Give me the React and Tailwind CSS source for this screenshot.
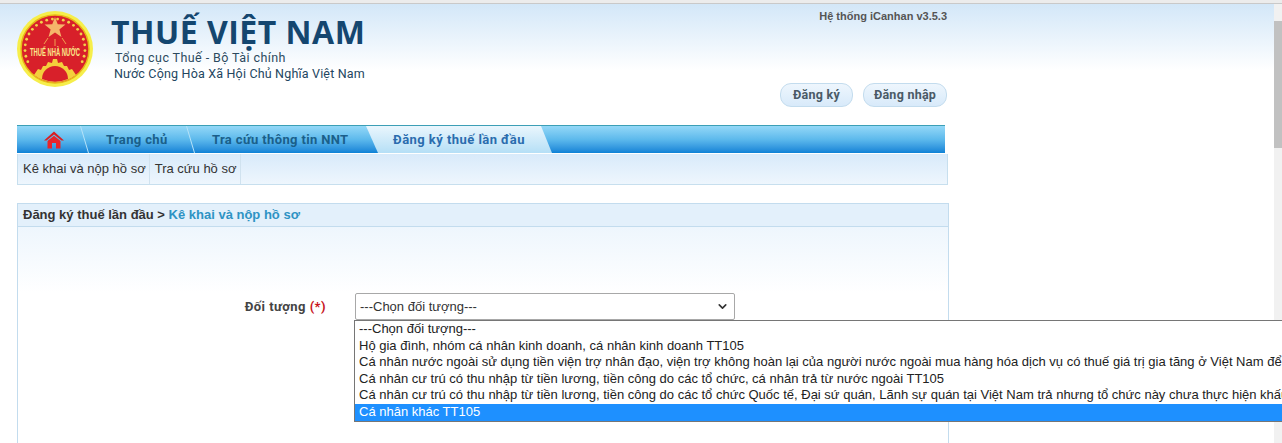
import React from "react";
import { ChevronDown } from "lucide-react";

const options = [
  "---Chọn đối tượng---",
  "Hộ gia đình, nhóm cá nhân kinh doanh, cá nhân kinh doanh TT105",
  "Cá nhân nước ngoài sử dụng tiền viện trợ nhân đạo, viện trợ không hoàn lại của người nước ngoài mua hàng hóa dịch vụ có thuế giá trị gia tăng ở Việt Nam để",
  "Cá nhân cư trú có thu nhập từ tiền lương, tiền công do các tổ chức, cá nhân trả từ nước ngoài TT105",
  "Cá nhân cư trú có thu nhập từ tiền lương, tiền công do các tổ chức Quốc tế, Đại sứ quán, Lãnh sự quán tại Việt Nam trả nhưng tổ chức này chưa thực hiện khấu",
  "Cá nhân khác TT105",
];

// huy hiệu ngành thuế
const Logo = () => {
  const leaves = [];
  for (let i = 0; i < 11; i++) {
    const a = ((205 - i * 11) * Math.PI) / 180;
    leaves.push([38 + 30 * Math.cos(a), 39 - 30 * Math.sin(a)]);
    leaves.push([38 - 30 * Math.cos(a), 39 - 30 * Math.sin(a)]);
  }
  const star = [];
  for (let i = 0; i < 10; i++) {
    const r = i % 2 ? 4.6 : 11;
    const a = (-90 + i * 36) * (Math.PI / 180);
    star.push(`${38 + r * Math.cos(a)},${18 + r * Math.sin(a)}`);
  }
  return (
    <svg width="78" height="78" viewBox="0 0 78 78" className="shrink-0">
      <circle cx="38" cy="39" r="38" fill="#f6ee4a" />
      <circle cx="38" cy="39" r="34" fill="#d8202a" stroke="#e8b818" strokeWidth="1.5" />
      <polygon points={star.join(" ")} fill="#f5b56a" />
      <path d="M38 29 V36 M31 28 L27 34 M45 28 L49 34" stroke="#f0a050" strokeWidth="1" />
      {leaves.map(([x, y], i) => (
        <circle key={i} cx={x} cy={y} r="1.4" fill="#f2d24a" />
      ))}
      <path
        d="M17 65 L21 59 L24 60 L26 56 L29 56 L31 52 L35 53 L36 49 L40 49 L41 53 L45 52 L47 56 L50 56 L52 60 L55 59 L59 65 A34 34 0 0 1 17 65 Z"
        fill="#f4cf3c"
      />
      <path d="M25 69 A13 13 0 0 1 51 69 A34 34 0 0 1 25 69 Z" fill="#d8202a" />
      <text
        x="13"
        y="46"
        textLength="50"
        lengthAdjust="spacingAndGlyphs"
        fontSize="10"
        fontWeight="700"
        fill="#fbe88a"
        fontFamily="Liberation Sans, sans-serif"
      >
        THUẾ NHÀ NƯỚC
      </text>
    </svg>
  );
};

const Divider = () => (
  <svg width="9" height="27" viewBox="0 0 9 27" className="shrink-0">
    <path d="M0.5 0 L8.5 27" stroke="#b5e2f8" strokeWidth="1" fill="none" />
  </svg>
);

const Home = () => (
  <svg width="20" height="18" viewBox="0 0 20 18">
    <path d="M10 0.5 L20 9.5 L17.5 9.5 L10 3.5 L2.5 9.5 L0 9.5 Z" fill="#d81e22" />
    <path d="M3.5 10 L10 4.8 L16.5 10 L16.5 17.5 L12 17.5 L12 12 L8 12 L8 17.5 L3.5 17.5 Z" fill="#e8242a" />
  </svg>
);

export default function App() {
  return (
    <div className="relative h-[443px] w-[1282px] overflow-hidden bg-white font-['Liberation_Sans',sans-serif]">
      <div className="h-[4px] border-b border-[#c9c9c9] bg-[#ececec]" />
      <div className="flex h-[439px]">
        <div className="min-w-0 flex-1">
          {/* header */}
          <div className="h-[121px] bg-gradient-to-b from-[#d3e7f8] to-white to-[55%] pl-[17px]">
            <div className="flex h-full w-[930px] justify-between">
              <div className="flex pt-[6px]">
                <Logo />
                <div className="pl-[16px] font-['Roboto',sans-serif]">
                  <div className="pt-[4px] font-['Open_Sans',sans-serif] text-[32px] leading-[36px] font-bold tracking-[0.5px] text-[#14466f]">
                    THUẾ VIỆT NAM
                  </div>
                  <div className="pl-[4px] text-[12.5px] leading-[16px] tracking-[0.42px] text-[#2c4a5e]">
                    Tổng cục Thuế - Bộ Tài chính
                  </div>
                  <div className="pl-[3px] text-[12.5px] leading-[16px] tracking-[0.18px] text-[#23465f]">
                    Nước Cộng Hòa Xã Hội Chủ Nghĩa Việt Nam
                  </div>
                </div>
              </div>
              <div className="flex flex-col items-end">
                <div className="pt-[6px] text-[11px] leading-[12px] font-bold text-[#555]">
                  Hệ thống iCanhan v3.5.3
                </div>
                <div className="flex gap-[10px] pt-[61px] font-['Roboto',sans-serif] text-[12.5px] font-bold tracking-[0.25px] text-[#4a5a66]">
                  <div className="flex h-[24px] w-[73px] items-center justify-center rounded-[11px] border border-[#c3dcee] bg-gradient-to-b from-[#eef6fd] to-[#d8eafa]">
                    Đăng ký
                  </div>
                  <div className="flex h-[24px] w-[84px] items-center justify-center rounded-[11px] border border-[#c3dcee] bg-gradient-to-b from-[#eef6fd] to-[#d8eafa]">
                    Đăng nhập
                  </div>
                </div>
              </div>
            </div>
          </div>

          <div className="pl-[17px]">
            {/* tab bar */}
            <div className="flex h-[28px] w-[928px] items-stretch border-t border-[#3c9fb6] bg-gradient-to-b from-[#93d8f7] via-[#5cb9ec] to-[#0b82d6] font-['Roboto',sans-serif] text-[13px] font-bold tracking-[0.35px] text-[#1a5f8a]">
              <div className="flex w-[63px] items-center justify-center pl-[10px]">
                <Home />
              </div>
              <Divider />
              <div className="flex w-[97px] items-center pl-[17px]">Trang chủ</div>
              <Divider />
              <div className="flex w-[171px] items-center whitespace-nowrap pl-[17px]">Tra cứu thông tin NNT</div>
              <div className="flex w-[186px] items-center justify-center bg-gradient-to-b from-[#eaf6fd] to-[#b5dff6] tracking-[0.45px] text-[#2a6cae] [clip-path:polygon(0_0,175px_0,186px_100%,12px_100%)]">
                Đăng ký thuế lần đầu
              </div>
            </div>
            {/* sub menu */}
            <div className="mt-px flex h-[31px] w-[931px] items-stretch border border-t-0 border-[#c7dfee] bg-gradient-to-b from-[#d8eafa] to-[#eef6fd] text-[13px] text-[#333]">
              <div className="flex items-center pr-[3px] pl-[5px]">Kê khai và nộp hồ sơ</div>
              <div className="flex items-center border-x border-[#d0e2ef] pr-[3px] pl-[5px]">Tra cứu hồ sơ</div>
            </div>
            {/* content panel */}
            <div className="mt-[18px] h-[240px] w-[932px] border-x border-t border-[#c3dcee]">
              <div className="flex h-[23px] items-center border-b border-[#c3dcee] bg-[#e3f0fb] pl-[5px] text-[13px] font-bold">
                <span className="text-[#333]">Đăng ký thuế lần đầu &gt;&nbsp;</span>
                <span className="text-[#2e93c4]">Kê khai và nộp hồ sơ</span>
              </div>
              <div className="h-[66px] bg-gradient-to-b from-[#eef6fd] to-white" />
              <div className="flex h-[27px] items-center">
                <div className="w-[308px] text-right font-['Roboto',sans-serif] text-[13px] font-bold tracking-[0.45px] text-[#444]">
                  Đối tượng <span className="text-[#c8141c]">(*)</span>
                </div>
                <div className="ml-[29px] flex h-[27px] w-[380px] items-center justify-between rounded-[2px] border border-[#a8a8a8] bg-white pr-[5px] pl-[4px] text-[13px] text-[#333]">
                  ---Chọn đối tượng---
                  <ChevronDown size={13} strokeWidth={3} className="text-[#333]" />
                </div>
              </div>
            </div>
          </div>
        </div>

        {/* scrollbar */}
        <div className="flex w-[8px] flex-col bg-[#f1f1f1]">
          <div className="h-[17px]" />
          <div className="h-[127px] bg-[#c1c1c1]" />
        </div>
      </div>

      {/* open select list */}
      <div className="absolute top-[320px] right-0 left-[354px] overflow-hidden border-y border-l border-[#767676] bg-white text-[13px] leading-[16.5px] whitespace-nowrap text-[#222]">
        {options.map((o, i) => (
          <div key={i} className={i === 5 ? "bg-[#1e90ff] pb-[1px] pl-[4px] text-white" : "pl-[4px]"}>
            {o}
          </div>
        ))}
      </div>
    </div>
  );
}
